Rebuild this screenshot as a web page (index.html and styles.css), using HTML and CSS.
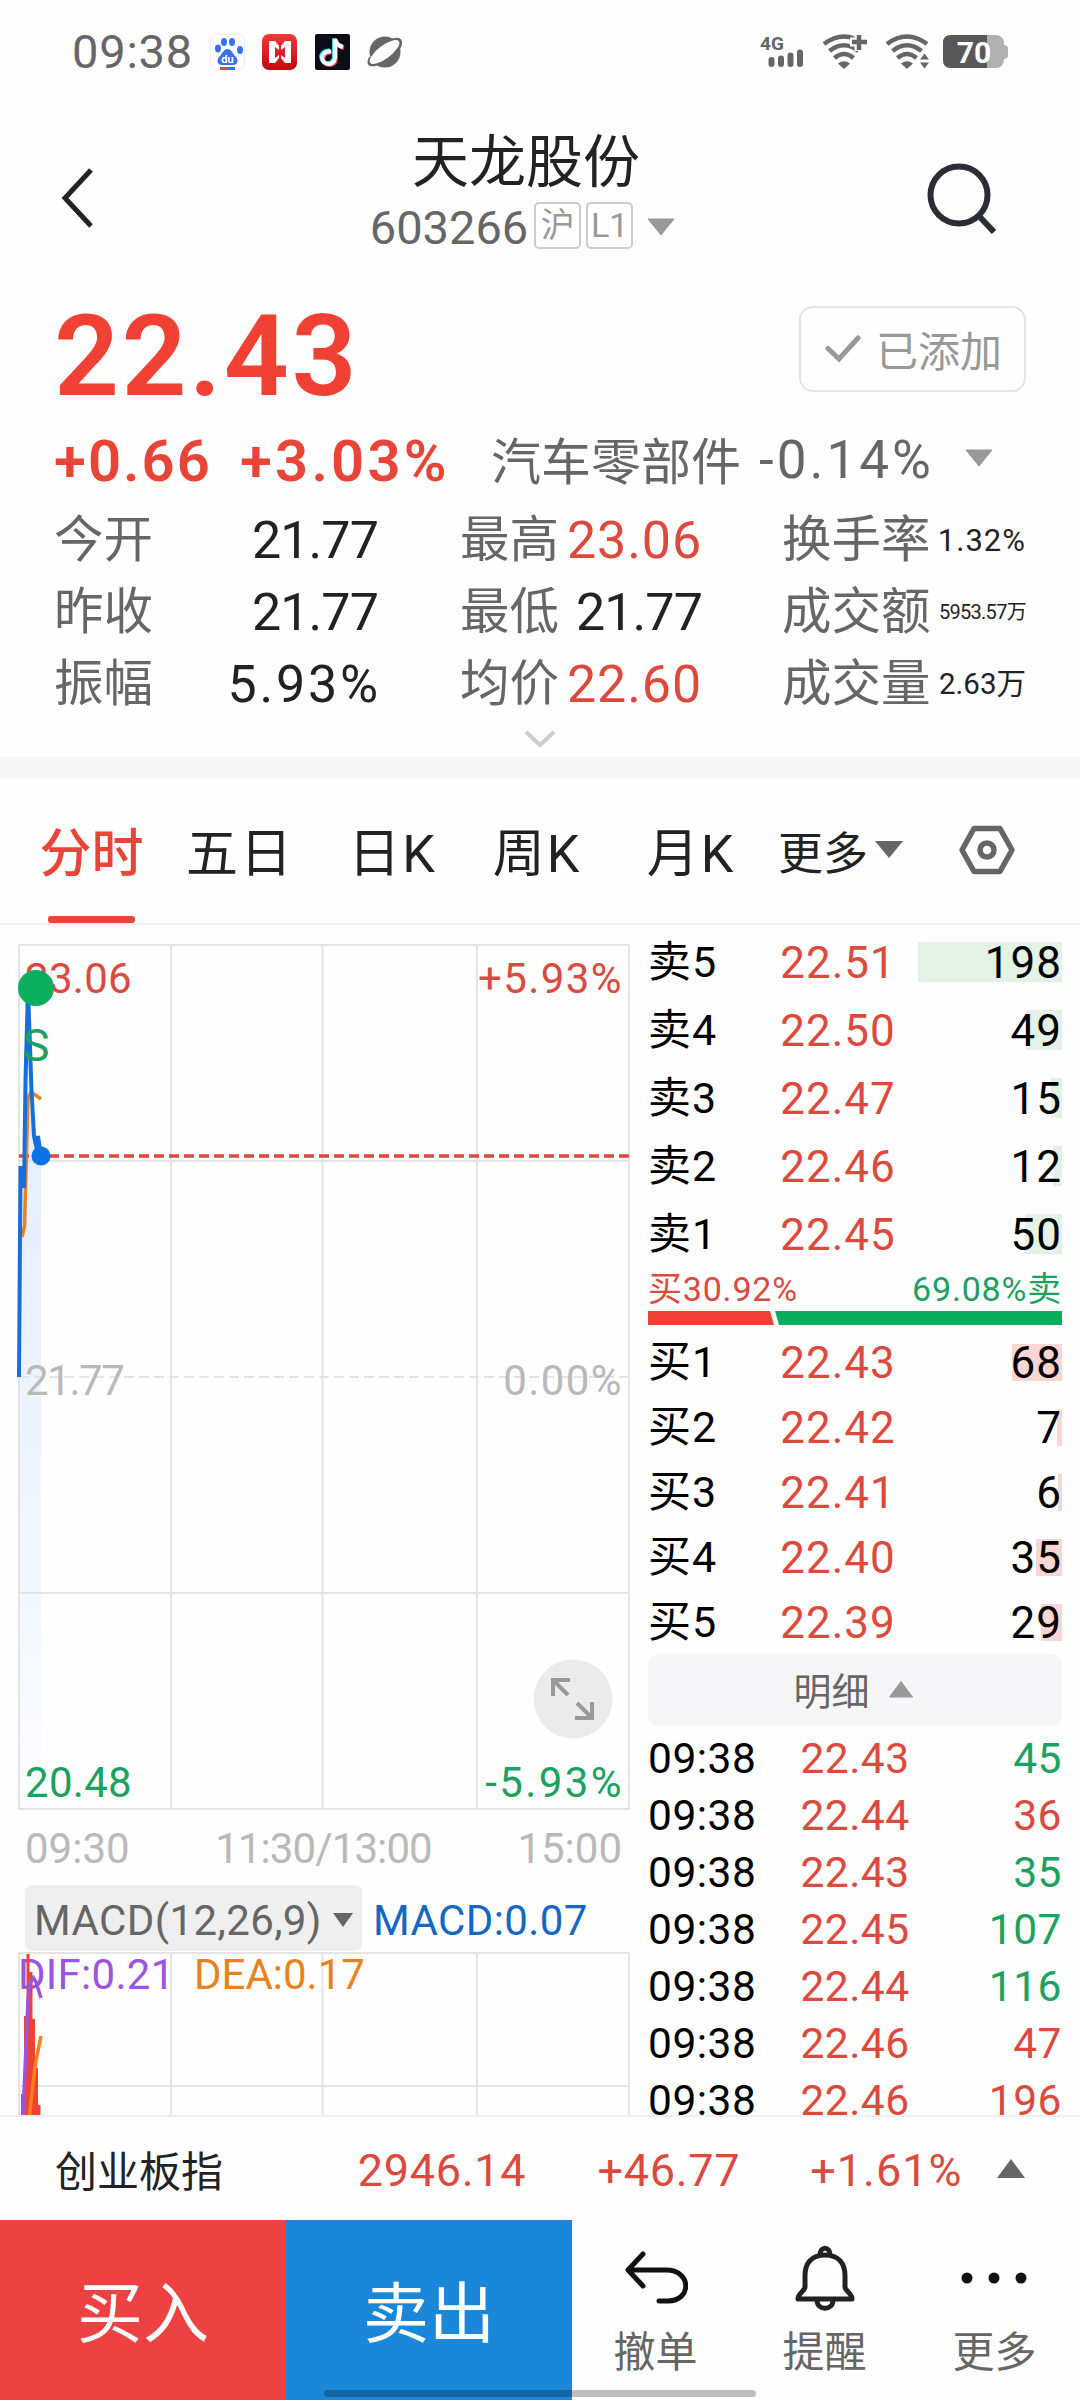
FILE: index.html
```html
<!DOCTYPE html>
<html lang="zh-CN">
<head>
    <meta charset="UTF-8">
    <title>天龙股份 603266</title>
    <link rel="stylesheet" href="styles.css">
</head>
<body>
    <div class="status-bar">
        <span class="clock">09:38</span>
        <svg class="app-icon" width="36" height="36" viewBox="0 0 36 36">
            <rect x=".5" y=".5" width="34" height="35" rx="7" fill="#fff" stroke="#eee"/>
            <g fill="#3b6fe8">
                <ellipse cx="8" cy="14.500" rx="3" ry="4"/><ellipse cx="14" cy="8" rx="3" ry="4"/>
                <ellipse cx="22" cy="8" rx="3" ry="4"/><ellipse cx="30" cy="16" rx="3" ry="4"/>
                <path d="M17.500 15c4 0 4.500 4 8 7.500 3.500 3.500 2 8.500-2 8.500h-12c-4 0-5.500-5-2-8.500C13 19 13.500 15 17.500 15z"/>
            </g>
            <text x="17.500" y="29" class="du" text-anchor="middle">du</text>
            <path d="M10 34.500h8" stroke="#c8553d" stroke-width="3"/><path d="M18 34.500h7" stroke="#3b6fe8" stroke-width="3"/>
        </svg>
        <svg class="app-icon" width="36" height="36" viewBox="0 0 36 36">
            <defs><linearGradient id="red" x1="0" y1="0" x2="0" y2="1"><stop offset="0" stop-color="#f23a3a"/><stop offset="1" stop-color="#c4060f"/></linearGradient></defs>
            <rect width="35" height="36" rx="7" fill="url(#red)"/>
            <path d="M7 7h6l4 5v4l-4-3v11l4-3v3l-4 5H7z" fill="#fff"/>
            <path d="M29 7h-6l-4 5v4l4-3v11l-4-3v3l4 5h6z" fill="#fff"/>
        </svg>
        <svg class="app-icon" width="36" height="36" viewBox="0 0 36 36">
            <rect width="35" height="36" rx="2" fill="#0c0c16"/>
            <g fill="none" stroke-width="4">
                <path d="M15 16.500c-12-1-11 14-1 12.500 4-1 5-4 5-7V4.500c1 5 4 7 8 8" stroke="#38dfe0"/>
                <path d="M17 18.500c-12-1-11 14-1 12.500 4-1 5-4 5-7V6c1 5 4 7 8 8" stroke="#ee3559"/>
                <path d="M16 17.500c-12-1-11 14-1 12.500 4-1 5-4 5-7V5c1 5 4 7 8 8" stroke="#fff"/>
            </g>
        </svg>
        <svg class="app-icon" width="36" height="36" viewBox="0 0 36 36">
            <circle cx="18" cy="18" r="15.500" fill="#666"/>
            <path d="M25 5C31 2 37 4 34.500 12 33 17 24 27 12 31 4 34-2 32 1.500 24" fill="#666"/>
            <ellipse cx="17.500" cy="18" rx="18" ry="6.500" transform="rotate(-37 17.500 18)" fill="#fefefe"/>
        </svg>
        <div class="status-right">
            <svg width="46" height="36" viewBox="0 0 46 36">
                <text x="1" y="16" class="net">4G</text>
                <path d="M12.500 26v4M22 24.500v5.500M31.500 21.500v8.500M41 18.500v11.500" stroke="#666" stroke-width="6" stroke-linecap="round"/>
            </svg>
            <svg width="46" height="36" viewBox="0 0 46 36">
                <g fill="none" stroke="#666" stroke-width="4.500"><path d="M2 10Q22-5 42 10"/><path d="M7.500 17Q22 5.500 36.500 17"/><path d="M12.500 24Q22 16 31.500 24"/></g>
                <path d="M16 29.500q6-4.500 12 0L22 35z" fill="#666"/>
                <path d="M28 8h18M37 0v17" stroke="#fefefe" stroke-width="9"/>
                <path d="M30 8h15M37 1v15" stroke="#666" stroke-width="4.500"/>
            </svg>
            <svg width="46" height="36" viewBox="0 0 46 36">
                <g fill="none" stroke="#666" stroke-width="4.500"><path d="M2 10Q22-5 42 10"/><path d="M7.500 17Q22 5.500 36.500 17"/><path d="M12.500 24Q22 16 31.500 24"/></g>
                <path d="M16 29.500q6-4.500 12 0L22 35z" fill="#666"/>
                <path d="M32 36V25l5-8h9v19z" fill="#fefefe"/>
                <path d="M35 25.500l4.500-6 4.500 6zM35 28.500l4.500 6 4.500-6z" fill="#666"/>
            </svg>
            <svg width="66" height="34" viewBox="0 0 66 34">
                <rect x="0" y="0" width="61" height="33" rx="8" fill="#b0b0b0"/>
                <path d="M61 10q4 1 4 3v8q0 2-4 3z" fill="#b0b0b0"/>
                <path d="M8 0h36v33H8q-8 0-8-8V8q0-8 8-8z" fill="#585858"/>
                <text x="31" y="27.500" class="level" text-anchor="middle">70</text>
            </svg>
        </div>
    </div>

    <div class="header">
        <svg class="back" width="34" height="60" viewBox="0 0 34 60"><path d="M30 2L4 30l26 28" fill="none" stroke="#222" stroke-width="5"/></svg>
        <div class="title">
            <h1>天龙股份</h1>
            <div class="code">
                <span>603266</span><i class="tag">沪</i><i class="tag">L1</i>
                <svg width="30" height="18" viewBox="0 0 30 18"><path d="M2 1h26L15 17z" fill="#999" stroke="#999" stroke-linejoin="round"/></svg>
            </div>
        </div>
        <svg class="search" width="72" height="72" viewBox="0 0 72 72"><g fill="none" stroke="#2b2d36" stroke-width="6"><circle cx="33" cy="33" r="28.500"/><path d="M53 54l15 16"/></g></svg>
    </div>

    <div class="quote">
        <div class="price-row">
            <span class="price">22.43</span>
            <div class="added">
                <svg width="36" height="28" viewBox="0 0 36 28"><path d="M3 13.500l11 10.500L33 3" fill="none" stroke="#999" stroke-width="5" stroke-linecap="round"/></svg>
                已添加
            </div>
        </div>
        <div class="change-row">
            <b class="chg">+0.66</b><b class="pct">+3.03%</b>
            <span class="sector">汽车零部件</span><span class="sector-pct">-0.14%</span>
            <svg width="30" height="18" viewBox="0 0 30 18"><path d="M2 1h26L15 17z" fill="#999" stroke="#999" stroke-linejoin="round"/></svg>
        </div>
        <div class="stats">
            <div class="stat"><span>今开</span><b>21.77</b></div>
            <div class="stat"><span>最高</span><b class="up">23.06</b></div>
            <div class="stat"><span>换手率</span><b class="mid">1.32%</b></div>
            <div class="stat"><span>昨收</span><b>21.77</b></div>
            <div class="stat"><span>最低</span><b>21.77</b></div>
            <div class="stat"><span>成交额</span><b class="small">5953.57万</b></div>
            <div class="stat"><span>振幅</span><b class="wide">5.93%</b></div>
            <div class="stat"><span>均价</span><b class="up">22.60</b></div>
            <div class="stat"><span>成交量</span><b class="volume">2.63万</b></div>
        </div>
        <svg class="expand" width="32" height="18" viewBox="0 0 32 18"><path d="M2 2l14 13L30 2" fill="none" stroke="#ccc" stroke-width="4"/></svg>
    </div>

    <div class="tabs">
        <span class="tab active">分时</span>
        <span class="tab">五日</span>
        <span class="tab">日K</span>
        <span class="tab">周K</span>
        <span class="tab">月K</span>
        <span class="tab-more">更多<svg width="28" height="18" viewBox="0 0 28 18"><path d="M0 0h28L14 17z" fill="#666"/></svg></span>
        <svg class="gear" width="58" height="50" viewBox="0 0 58 50"><g fill="none" stroke="#666" stroke-width="5.500"><path d="M16 3.500h26L54 25 42 46.500H16L4 25z" stroke-linejoin="round"/><circle cx="29" cy="25" r="7"/></g></svg>
    </div>

    <div class="main">
        <div class="charts">
            <svg class="minute-chart" width="640" height="887" viewBox="0 925 640 887">
                <defs><linearGradient id="area" x1="0" y1="0" x2="0" y2="1"><stop offset="0" stop-color="#dfeaff"/><stop offset=".3" stop-color="#e8f0ff"/><stop offset="1" stop-color="#fafcff"/></linearGradient></defs>
                <path d="M20 1377V1166L24 1188L28 988L35 1140L41 1156V1809H20z" fill="url(#area)"/>
                <g fill="none" stroke="#e4e4e4" stroke-width="2">
                    <path d="M19 945H629V1809H19zM171 945V1809M322.500 945V1809M477 945V1809M19 1161H629M19 1593H629"/>
                    <path d="M19 1377H629" stroke-dasharray="10 5"/>
                </g>
                <path d="M19 1156H629" stroke="#d9493e" stroke-width="3.500" stroke-dasharray="10 5"/>
                <g class="axis">
                    <text x="25" y="993" class="t-up">23.06</text>
                    <text x="623" y="993" class="t-up end">+5.93%</text>
                    <text x="25" y="1395" class="t-flat narrow">21.77</text>
                    <text x="623" y="1395" class="t-flat end">0.00%</text>
                    <text x="25" y="1797" class="t-down">20.48</text>
                    <text x="624" y="1797" class="t-down end minus">-5.93%</text>
                </g>
                <path d="M22 1237L24.500 1226L28 1098L31 1092L41 1099" fill="none" stroke="#e8821e" stroke-width="3.500"/>
                <path d="M19 1377L20.500 1166L24 1188L25.500 1080L28 988L31.500 1090L34 1136L37 1150L38 1136L41 1156" fill="none" stroke="#176fdc" stroke-width="4"/>
                <circle cx="41" cy="1156" r="9.500" fill="#0d72e8"/>
                <circle cx="36" cy="988" r="18" fill="#0bae5e"/>
                <text x="36" y="1061" class="sell-mark">S</text>
                <circle cx="573" cy="1699" r="39.500" fill="#ebebeb"/>
                <g fill="none" stroke="#999" stroke-width="4"><path d="M553 1696V1680H570M553 1680L568 1695M592 1702V1718H575M592 1718L577 1703"/></g>
            </svg>
            <div class="time-axis"><span>09:30</span><span class="noon">11:30/13:00</span><span>15:00</span></div>
            <div class="macd-head">
                <span class="macd-select">MACD(12,26,9)<svg width="20" height="14" viewBox="0 0 20 14"><path d="M0 0h20L10 14z" fill="#666"/></svg></span>
                <span class="macd-value">MACD:0.07</span>
            </div>
            <svg class="macd-chart" width="640" height="163" viewBox="0 1952 640 163">
                <path d="M19 1953H629V2116H19zM171 1953V2116M322.500 1953V2116M477 1953V2116M19 2086H629" fill="none" stroke="#e4e4e4" stroke-width="2"/>
                <text x="18" y="1989" class="dif">DIF:0.21</text>
                <text x="194" y="1989" class="dea">DEA:0.17</text>
                <path d="M21 2116V2094H24V2016H26.500V1954H29.500V1972H32.500V2019H35V2068H38V2105H40.500V2116z" fill="#ee4236"/>
                <path d="M23 2116L28 2000L30 1983L33.500 1978L36 1982L41 1998" fill="none" stroke="#9c54dc" stroke-width="3.500"/>
                <path d="M29.500 2116L35 2066L41 2036" fill="none" stroke="#fb7f18" stroke-width="3.500"/>
            </svg>
        </div>

        <div class="book">
            <div class="level-list asks">
                <div class="row"><span>卖5</span><b>22.51</b><i><em style="width:144px"></em>198</i></div>
                <div class="row"><span>卖4</span><b>22.50</b><i><em style="width:36px"></em>49</i></div>
                <div class="row"><span>卖3</span><b>22.47</b><i><em style="width:11px"></em>15</i></div>
                <div class="row"><span>卖2</span><b>22.46</b><i><em style="width:9px"></em>12</i></div>
                <div class="row"><span>卖1</span><b>22.45</b><i><em style="width:37px"></em>50</i></div>
            </div>
            <div class="ratio"><span class="up">买30.92%</span><span class="down">69.08%卖</span></div>
            <svg class="ratio-bar" width="414" height="14" viewBox="0 0 414 14"><path d="M0 0h122l4 14H0z" fill="#f04134"/><path d="M127 0h287v14H131z" fill="#09ad5c"/></svg>
            <div class="level-list bids">
                <div class="row"><span>买1</span><b>22.43</b><i><em style="width:50px"></em>68</i></div>
                <div class="row"><span>买2</span><b>22.42</b><i><em style="width:5px"></em>7</i></div>
                <div class="row"><span>买3</span><b>22.41</b><i><em style="width:4px"></em>6</i></div>
                <div class="row"><span>买4</span><b>22.40</b><i><em style="width:26px"></em>35</i></div>
                <div class="row"><span>买5</span><b>22.39</b><i><em style="width:21px"></em>29</i></div>
            </div>
            <div class="detail-btn">明细<svg width="26" height="18" viewBox="0 0 26 18"><path d="M1.500 17L13 1.500 24.500 17z" fill="#999" stroke="#999" stroke-linejoin="round"/></svg></div>
            <div class="trades">
                <div class="trade"><span>09:38</span><b>22.43</b><i class="down">45</i></div>
                <div class="trade"><span>09:38</span><b>22.44</b><i class="up">36</i></div>
                <div class="trade"><span>09:38</span><b>22.43</b><i class="down">35</i></div>
                <div class="trade"><span>09:38</span><b>22.45</b><i class="down">107</i></div>
                <div class="trade"><span>09:38</span><b>22.44</b><i class="down">116</i></div>
                <div class="trade"><span>09:38</span><b>22.46</b><i class="up">47</i></div>
                <div class="trade"><span>09:38</span><b>22.46</b><i class="up">196</i></div>
            </div>
        </div>
    </div>

    <div class="index-bar">
        <span class="name">创业板指</span><span>2946.14</span><span>+46.77</span><span>+1.61%</span>
        <svg width="28" height="19" viewBox="0 0 28 19"><path d="M0 19L14 0l14 19z" fill="#666"/></svg>
    </div>

    <div class="actions">
        <div class="buy">买入</div>
        <div class="sell">卖出</div>
        <div class="action">
            <svg width="64" height="68" viewBox="0 0 64 68"><path d="M19 11L4 27l15 16M5 27h37c26 0 26 31 2 31h-9" fill="none" stroke="#111" stroke-width="5" stroke-linecap="round" stroke-linejoin="round"/></svg>
            撤单
        </div>
        <div class="action">
            <svg width="64" height="68" viewBox="0 0 64 68"><g fill="none" stroke="#222" stroke-width="5" stroke-linejoin="round"><path d="M32 12c-14 0-20 9-20 21v11c0 4-7 6-7 12h54c0-6-7-8-7-12V33c0-12-6-21-20-21z"/><path d="M27 12c0-9 10-9 10 0M24 57c0 11 16 11 16 0"/></g></svg>
            提醒
        </div>
        <div class="action">
            <svg width="68" height="68" viewBox="0 0 68 68"><g fill="#111"><circle cx="6" cy="35" r="5.500"/><circle cx="33" cy="35" r="5.500"/><circle cx="60" cy="35" r="5.500"/></g></svg>
            更多
        </div>
        <div class="home-bar"></div>
    </div>
</body>
</html>
```
FILE: styles.css
```css
* {
    box-sizing: border-box;
}
body {
    margin: 0;
    width: 1080px;
    height: 2400px;
    overflow: hidden;
    background: #fefefe;
    color: #222;
    font-family: Roboto, "Noto Sans CJK SC", sans-serif;
}
svg {
    display: block;
    flex-shrink: 0;
}
b, i, em {
    font-weight: 400;
    font-style: normal;
}
.up {
    color: #dd493d;
}
.down {
    color: #1ba160;
}

/* status bar */
.status-bar {
    display: flex;
    align-items: center;
    height: 104px;
    padding: 0 71px 0 72px;
}
.status-bar svg {
    overflow: visible;
}
.clock {
    width: 138px;
    font-size: 47px;
    letter-spacing: 0.8px;
    line-height: 48px;
    padding-bottom: 1px;
    color: #666;
}
.app-icon {
    margin-right: 16.4px;
}
.du {
    font: bold 11px Roboto, sans-serif;
    fill: #fff;
}
.status-right {
    display: flex;
    align-items: center;
    margin-left: auto;
    gap: 17px;
}
.status-right svg:last-child {
    margin-left: -5px;
}
.net {
    font: bold 19px Roboto, sans-serif;
    fill: #666;
}
.level {
    font: bold 30px Roboto, sans-serif;
    fill: #fff;
}

/* header */
.header {
    display: flex;
    align-items: center;
    height: 188px;
    padding: 0 82px 0 61px;
}
.title {
    flex: 1;
    display: flex;
    flex-direction: column;
    align-items: center;
    padding-left: 25px;
    padding-bottom: 15px;
}
.title h1 {
    margin: 0;
    padding-left: 6px;
    font-size: 57px;
    font-weight: 400;
    line-height: 72px;
}
.code {
    display: flex;
    align-items: center;
    height: 56px;
    font-size: 47px;
    color: #666;
}
.code span {
    margin-right: 6px;
    padding-top: 2px;
}
.tag {
    width: 47px;
    height: 47px;
    margin: 0 5px 2px 0;
    border: 2px solid #ccc;
    border-radius: 5px;
    font-size: 34px;
    line-height: 42px;
    text-align: center;
    color: #999;
}
.code svg {
    margin-left: 8px;
}

/* quote */
.quote {
    height: 465px;
    padding: 14px 54px 0;
}
.price-row {
    display: flex;
    justify-content: space-between;
    height: 106px;
}
.price {
    font-size: 114px;
    font-weight: 600;
    line-height: 100px;
    letter-spacing: 2.4px;
    color: #f04134;
}
.added {
    display: flex;
    align-items: center;
    gap: 15px;
    width: 227px;
    height: 86px;
    padding: 0 0 1px 24px;
    border: 2px solid #e4e4e4;
    border-radius: 14px;
    font-size: 42px;
    color: #999;
}
.change-row {
    display: flex;
    align-items: center;
    height: 92px;
    color: #666;
    white-space: nowrap;
}
.chg, .pct {
    padding-top: 6px;
    font-size: 58px;
    font-weight: 600;
    letter-spacing: 2px;
    color: #e84538;
}
.chg {
    width: 186px;
}
.pct {
    width: 251px;
    letter-spacing: 3.2px;
}
.sector {
    width: 268px;
    font-size: 50px;
}
.sector-pct {
    width: 205px;
    padding-top: 4px;
    font-size: 53px;
    letter-spacing: 3px;
}
.stats {
    display: grid;
    grid-template-columns: 406px 322px 244px;
    grid-auto-rows: 72px;
}
.stat {
    display: flex;
    justify-content: space-between;
    align-items: center;
    font-size: 49.500px;
    line-height: 66px;
    white-space: nowrap;
    color: #666;
}
.stat:nth-child(3n+1) {
    padding-right: 82px;
}
.stat:nth-child(3n+2) {
    padding-right: 80px;
}
.stat b {
    padding-top: 2px;
    font-size: 52px;
    letter-spacing: -0.9px;
    color: #222;
}
.stat b.up {
    color: #dd493d;
    letter-spacing: 0.9px;
}
.stat b.wide {
    letter-spacing: 2.8px;
    margin-right: -3px;
}
.stat b.mid {
    font-size: 31px;
    letter-spacing: 1px;
}
.stat b.volume {
    padding-top: 0;
    font-size: 29.500px;
    letter-spacing: 0;
}
.stat b.small {
    padding-top: 0;
    font-size: 20px;
    letter-spacing: -0.7px;
}
.expand {
    margin: 10px auto 0;
}

/* period tabs */
.tabs {
    display: grid;
    grid-template-columns: 147px 150px 155px 134px 174px 180px auto;
    align-items: center;
    height: 168px;
    padding-left: 18px;
    border-top: 21px solid #f5f6fa;
    border-bottom: 2px solid #eee;
}
.tab {
    display: flex;
    flex-direction: column;
    align-items: center;
    padding-top: 32px;
    height: 145px;
    font-size: 52px;
    letter-spacing: 2px;
    line-height: 90px;
}
.tab.active {
    font-weight: 500;
    letter-spacing: 0;
    color: #e84538;
}
.tab.active::after {
    content: "";
    width: 87px;
    height: 7px;
    margin-top: 16px;
    border-radius: 3px;
    background: #e84538;
}
.tab-more {
    display: flex;
    align-items: center;
    gap: 7px;
    font-size: 45px;
}
.tab-more svg {
    margin-bottom: 2px;
}
.gear {
    margin-top: -2px;
}

/* charts and order book */
.main {
    display: flex;
    height: 1192px;
    border-bottom: 2px solid #eee;
    overflow: hidden;
}
.charts {
    width: 648px;
}
.axis text, .dif, .dea {
    font-size: 42px;
    letter-spacing: 0.3px;
}
.axis .end {
    text-anchor: end;
    letter-spacing: 1.4px;
}
.axis .minus {
    letter-spacing: 2.4px;
}
.axis .narrow {
    letter-spacing: -1.4px;
}
.t-up {
    fill: #db4a3f;
}
.t-flat {
    fill: #b9b9b9;
}
.t-down {
    fill: #1ba160;
}
.sell-mark {
    font-size: 45px;
    text-anchor: middle;
    fill: #1ba160;
}
.dif {
    fill: #9c54dc;
}
.dea {
    fill: #e8821e;
}
.macd-chart .dea {
    letter-spacing: 0;
}
.time-axis {
    display: flex;
    justify-content: space-between;
    width: 622px;
    height: 73px;
    padding-left: 25px;
    font-size: 42px;
    line-height: 73px;
    color: #b9b9b9;
}
.time-axis .noon {
    letter-spacing: -0.9px;
}
.macd-head {
    display: flex;
    gap: 11px;
    height: 67px;
    padding-left: 25px;
    font-size: 42px;
    letter-spacing: 0.4px;
    line-height: 71px;
    white-space: nowrap;
}
.macd-select {
    display: flex;
    align-items: center;
    justify-content: space-between;
    width: 337px;
    height: 66px;
    padding: 4px 9px 0;
    border-radius: 7px;
    background: #efefef;
    color: #666;
}
.macd-value {
    color: #1667c4;
}
.book {
    width: 414px;
    color: #000;
}
.asks {
    padding-top: 3px;
}
.row, .trade {
    display: flex;
    align-items: center;
    white-space: nowrap;
}
.row {
    height: 68px;
    font-size: 44px;
    letter-spacing: 1px;
    line-height: 60px;
}
.bids .row {
    height: 65px;
}
.row span {
    width: 109px;
    padding-bottom: 1px;
    font-size: 43px;
}
.row b {
    width: 162px;
    padding-top: 1px;
    text-align: center;
    color: #dd493d;
}
.row i {
    position: relative;
    flex: 1;
    height: 40px;
    line-height: 43px;
    text-align: right;
}
.bids .row i {
    height: 37px;
    line-height: 39px;
}
/* volume bar behind the number */
.row em {
    position: absolute;
    z-index: -1;
    top: 0;
    right: 0;
    height: 100%;
    background: #e3f2e4;
}
.bids em {
    background: #f9d5d3;
}
.ratio {
    display: flex;
    justify-content: space-between;
    height: 43px;
    font-size: 34px;
    letter-spacing: 0.8px;
    line-height: 43px;
}
.bids {
    padding-top: 5px;
}
.bids + .detail-btn {
    margin-top: -1px;
}
.detail-btn {
    display: flex;
    align-items: center;
    justify-content: center;
    gap: 18px;
    height: 72px;
    padding: 0 3px 3px 0;
    border-radius: 10px;
    background: #f6f6f9;
    font-size: 38px;
    color: #666;
}
.trades {
    padding-top: 4px;
}
.trade {
    height: 57px;
    font-size: 42.500px;
    letter-spacing: 0.5px;
}
.trade span {
    width: 127px;
}
.trade b {
    width: 160px;
    text-align: center;
    color: #dd493d;
}
.trade i {
    flex: 1;
    text-align: right;
}

/* index strip */
.index-bar {
    display: flex;
    align-items: center;
    height: 103px;
    padding: 3px 55px 0;
    font-size: 45px;
    letter-spacing: 0.7px;
    color: #dd493d;
}
.index-bar .name {
    width: 303px;
    padding-bottom: 4px;
    font-size: 42px;
    letter-spacing: 0;
    color: #222;
}
.index-bar span:nth-child(2) {
    width: 240px;
}
.index-bar span:nth-child(3) {
    width: 213px;
}
.index-bar span:nth-child(4) {
    width: 187px;
    letter-spacing: 1px;
}
.index-bar svg {
    margin-bottom: 3px;
}

/* bottom actions */
.actions {
    position: relative;
    display: flex;
    height: 180px;
}
.buy, .sell {
    width: 286px;
    font-size: 66px;
    line-height: 189px;
    text-align: center;
    color: #fff;
    background: #ee4242;
}
.sell {
    background: #1a87d8;
}
.action {
    display: flex;
    flex-direction: column;
    align-items: center;
    width: 169px;
    padding-top: 23px;
    font-size: 42px;
    line-height: 84px;
    color: #666;
}
.action:nth-child(3), .action:nth-child(4) {
    padding-right: 2px;
}
.home-bar {
    position: absolute;
    left: 324px;
    bottom: 3px;
    width: 432px;
    height: 7px;
    border-radius: 4px;
    background: rgba(0, 0, 0, 0.25);
}
```
